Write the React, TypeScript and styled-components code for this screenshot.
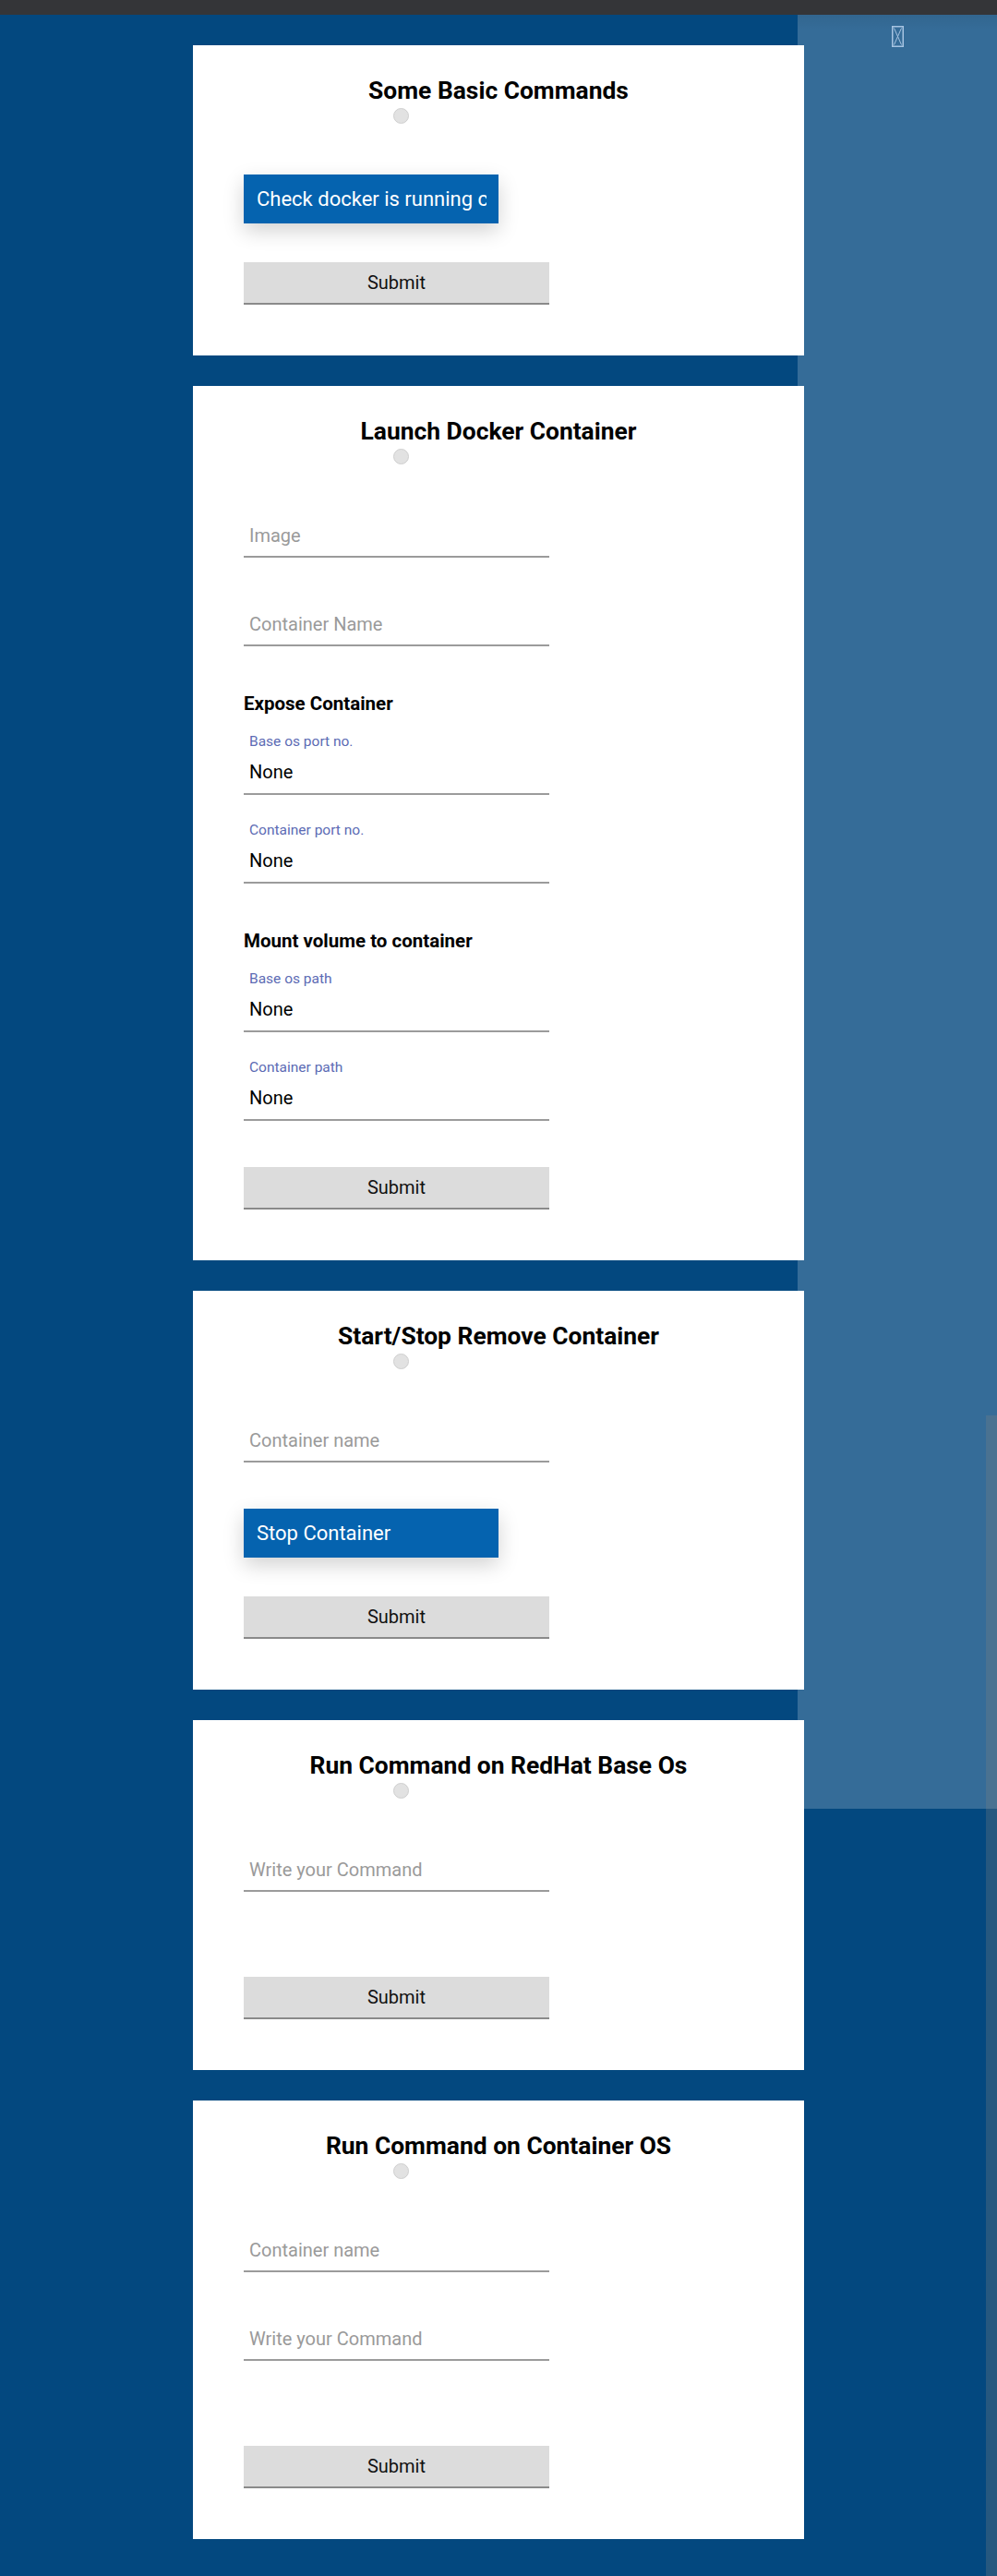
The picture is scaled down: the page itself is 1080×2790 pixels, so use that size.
import React from "react";
import styled, { createGlobalStyle } from "styled-components";

const GlobalStyle = createGlobalStyle`
  html, body {
    margin: 0;
    padding: 0;
    background: #03487f;
  }
  body {
    font-family: Roboto, "Liberation Sans", Arial, sans-serif;
  }
  * { box-sizing: border-box; }
`;

const Page = styled.div`
  position: relative;
  min-height: 2790px;
  background: #03487f;
  overflow: hidden;
`;

const TopBar = styled.div`
  height: 16px;
  background: #343538;
`;

const Main = styled.main`
  position: relative;
  z-index: 1;
  display: flex;
  flex-direction: column;
  align-items: center;
  gap: 33px;
  padding: 33px 0 38px;
`;

const SidePanel = styled.aside`
  position: absolute;
  z-index: 0;
  top: 16px;
  right: 0;
  width: 216px;
  height: 1943px;
  background: linear-gradient(rgba(0, 0, 0, 0.06), rgba(0, 0, 0, 0) 16px),
    rgba(255, 255, 255, 0.2);
  display: flex;
  flex-direction: column;
  align-items: center;
  padding-top: 12px;
`;

const CloseGlyph = styled.svg`
  display: block;
  width: 13px;
  height: 23px;
`;

const ScrollStrip = styled.div`
  position: absolute;
  z-index: 2;
  top: 1533px;
  right: 0;
  bottom: 0;
  width: 12px;
  background: rgba(128, 128, 128, 0.28);
`;

const Card = styled.section`
  width: 662px;
  background: #ffffff;
  padding: 0 55px 55px;
  display: flex;
  flex-direction: column;
  align-items: flex-start;
`;

const CardTitle = styled.h2`
  align-self: stretch;
  margin: 32px -55px 0;
  height: 34px;
  line-height: 34px;
  font-size: 26.4px;
  font-weight: 700;
  text-align: center;
  color: #000;
`;

const Radio = styled.input.attrs({ type: "radio" })`
  appearance: none;
  width: 17px;
  height: 17px;
  margin: 2px 0 0 162px;
  border-radius: 50%;
  background: #e2e2e2;
  border: 1px solid #cfcfcf;
`;

const TextInput = styled.input<{ $mt: number }>`
  width: 331px;
  height: 46px;
  margin-top: ${(p) => p.$mt}px;
  border: none;
  border-bottom: 2px solid #9b9b9b;
  padding: 0 6px;
  font-family: Roboto, sans-serif;
  font-size: 20px;
  color: #000;
  background: transparent;
  outline: none;
  &::placeholder {
    color: #9a9a9a;
  }
`;

const SectionHeading = styled.h3`
  margin: 50px 0 0;
  height: 24px;
  line-height: 24px;
  font-size: 20.5px;
  font-weight: 700;
  color: #000;
`;

const FieldGroup = styled.div<{ $mt: number }>`
  display: flex;
  flex-direction: column;
  margin-top: ${(p) => p.$mt}px;
`;

const FieldLabel = styled.label`
  height: 20px;
  line-height: 20px;
  padding-left: 6px;
  font-size: 15.5px;
  color: #5c6bb4;
`;

const LineSelect = styled.select`
  appearance: none;
  width: 331px;
  height: 48px;
  border: none;
  border-bottom: 2px solid #9b9b9b;
  border-radius: 0;
  padding: 0 6px;
  font-family: Roboto, sans-serif;
  font-size: 20px;
  color: #000;
  background: transparent;
  outline: none;
`;

const BlueSelect = styled.select<{ $mt: number }>`
  appearance: none;
  width: 276px;
  height: 53px;
  margin-top: ${(p) => p.$mt}px;
  border: none;
  border-radius: 0;
  padding: 0 13px 0 14px;
  font-family: Roboto, sans-serif;
  font-size: 22px;
  color: #ffffff;
  background: #0563af;
  box-shadow: 0 8px 22px rgba(0, 0, 0, 0.18);
  outline: none;
`;

const SubmitButton = styled.button<{ $mt: number }>`
  width: 331px;
  height: 46px;
  margin-top: ${(p) => p.$mt}px;
  border: none;
  border-bottom: 2px solid #8a8a8a;
  background: #dcdcdc;
  font-family: Roboto, sans-serif;
  font-size: 20px;
  color: #111;
  padding: 0;
`;

const SelectField = ({ label, mt }: { label: string; mt: number }) => (
  <FieldGroup $mt={mt}>
    <FieldLabel>{label}</FieldLabel>
    <LineSelect defaultValue="None">
      <option>None</option>
    </LineSelect>
  </FieldGroup>
);

export default function App() {
  return (
    <Page>
      <GlobalStyle />
      <TopBar />
      <SidePanel>
        <CloseGlyph viewBox="0 0 13 23">
          <rect x="0.75" y="0.75" width="11.5" height="21.5" fill="none" stroke="#a7c4e2" strokeWidth="1.5" />
          <path d="M2.5 2.5 L10.5 20.5 M10.5 2.5 L2.5 20.5" stroke="#a7c4e2" strokeWidth="1" fill="none" />
        </CloseGlyph>
      </SidePanel>
      <ScrollStrip />
      <Main>
        <Card>
          <CardTitle>Some Basic Commands</CardTitle>
          <Radio name="r1" />
          <BlueSelect $mt={55} defaultValue="running">
            <option value="running">Check docker is running containers</option>
          </BlueSelect>
          <SubmitButton $mt={42}>Submit</SubmitButton>
        </Card>

        <Card>
          <CardTitle>Launch Docker Container</CardTitle>
          <Radio name="r2" />
          <TextInput $mt={55} placeholder="Image" />
          <TextInput $mt={50} placeholder="Container Name" />
          <SectionHeading>Expose Container</SectionHeading>
          <SelectField label="Base os port no." mt={19} />
          <SelectField label="Container port no." mt={28} />
          <SectionHeading>Mount volume to container</SectionHeading>
          <SelectField label="Base os path" mt={19} />
          <SelectField label="Container path" mt={28} />
          <SubmitButton $mt={50}>Submit</SubmitButton>
        </Card>

        <Card>
          <CardTitle>Start/Stop Remove Container</CardTitle>
          <Radio name="r3" />
          <TextInput $mt={55} placeholder="Container name" />
          <BlueSelect $mt={50} defaultValue="stop">
            <option value="stop">Stop Container</option>
          </BlueSelect>
          <SubmitButton $mt={42}>Submit</SubmitButton>
        </Card>

        <Card>
          <CardTitle>Run Command on RedHat Base Os</CardTitle>
          <Radio name="r4" />
          <TextInput $mt={55} placeholder="Write your Command" />
          <SubmitButton $mt={92}>Submit</SubmitButton>
        </Card>

        <Card>
          <CardTitle>Run Command on Container OS</CardTitle>
          <Radio name="r5" />
          <TextInput $mt={55} placeholder="Container name" />
          <TextInput $mt={50} placeholder="Write your Command" />
          <SubmitButton $mt={92}>Submit</SubmitButton>
        </Card>
      </Main>
    </Page>
  );
}
